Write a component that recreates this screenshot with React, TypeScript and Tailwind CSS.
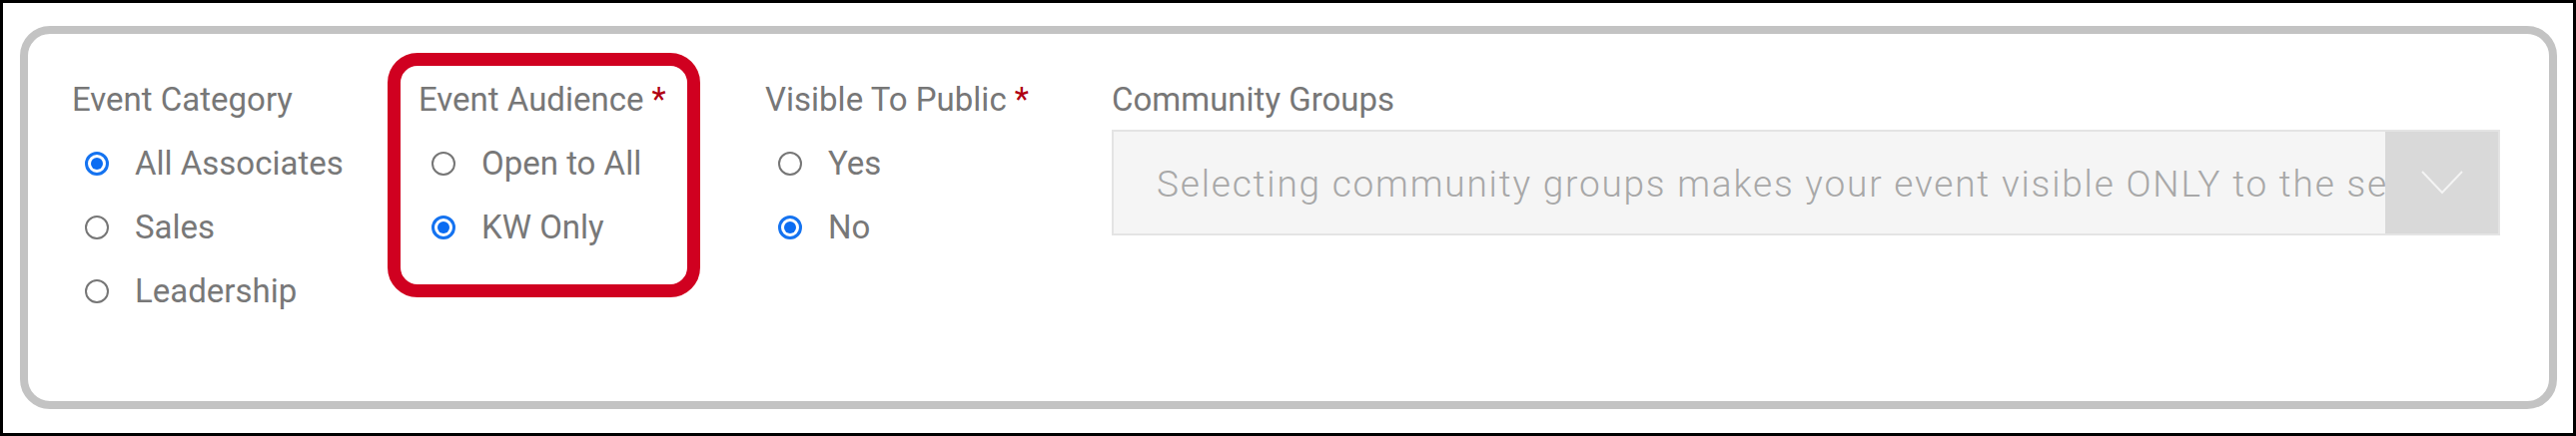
import React from 'react';

type Option = { label: string; checked?: boolean };

const font = { fontFamily: 'Roboto, "Noto Sans", sans-serif' };

function Radio({ checked }: { checked?: boolean }) {
  if (checked) {
    return (
      <span className="flex h-[24px] w-[24px] shrink-0 items-center justify-center rounded-full border-[3px] border-[#1573f0] bg-white">
        <span className="h-[12px] w-[12px] rounded-full bg-[#0b6cf2]" />
      </span>
    );
  }
  return <span className="h-[24px] w-[24px] shrink-0 rounded-full border-[2.5px] border-[#767676] bg-white" />;
}

function RadioGroup({ title, required, options }: { title: string; required?: boolean; options: Option[] }) {
  return (
    <div className="flex w-[347px] shrink-0 flex-col">
      <div className="h-[36px] text-[33px] leading-[36px] text-[#777777]">
        {title}
        {required && <span className="ml-[8px] text-[#b00012]">*</span>}
      </div>
      <div className="mt-[14px] flex flex-col">
        {options.map((o) => (
          <label key={o.label} className="flex h-[64px] items-center gap-[26px] pl-[13px]">
            <Radio checked={o.checked} />
            <span className="text-[33px] leading-[36px] text-[#787878]">{o.label}</span>
          </label>
        ))}
      </div>
    </div>
  );
}

export default function App() {
  return (
    <div className="h-[437px] w-[2579px] border-[3px] border-black bg-white" style={font}>
      <div className="ml-[17px] mr-[16px] mt-[23px] flex h-[384px] rounded-[30px] border-[8px] border-[#c3c3c3] pl-[44px] pr-[49px] pt-[48px]">
        <RadioGroup
          title="Event Category"
          options={[{ label: 'All Associates', checked: true }, { label: 'Sales' }, { label: 'Leadership' }]}
        />
        <div className="relative">
          <RadioGroup title="Event Audience" required options={[{ label: 'Open to All' }, { label: 'KW Only', checked: true }]} />
          <div className="pointer-events-none absolute left-[-31px] top-[-29px] h-[245px] w-[313px] rounded-[30px] border-[13px] border-[#d00020]" />
        </div>
        <RadioGroup title="Visible To Public" required options={[{ label: 'Yes' }, { label: 'No', checked: true }]} />
        <div className="flex min-w-0 flex-1 flex-col">
          <div className="h-[36px] text-[33px] leading-[36px] text-[#777777]">Community Groups</div>
          <div className="mt-[12px] flex h-[106px] border-[2px] border-[#e4e4e4] bg-[#f5f5f5]">
            <div className="flex min-w-0 flex-1 items-center overflow-hidden whitespace-nowrap pl-[43px] pt-[4px] text-[37px] font-light tracking-[1.8px] text-[#a8a8a8]">
              Selecting community groups makes your event visible ONLY to the selected groups
            </div>
            <div className="flex w-[113px] shrink-0 items-center justify-center bg-[#d9d9d9]">
              <svg width="42" height="24" viewBox="0 0 42 24" fill="none">
                <path d="M1 1 L21 22 L41 1" stroke="#f4f4f4" strokeWidth="2" />
              </svg>
            </div>
          </div>
        </div>
      </div>
    </div>
  );
}
